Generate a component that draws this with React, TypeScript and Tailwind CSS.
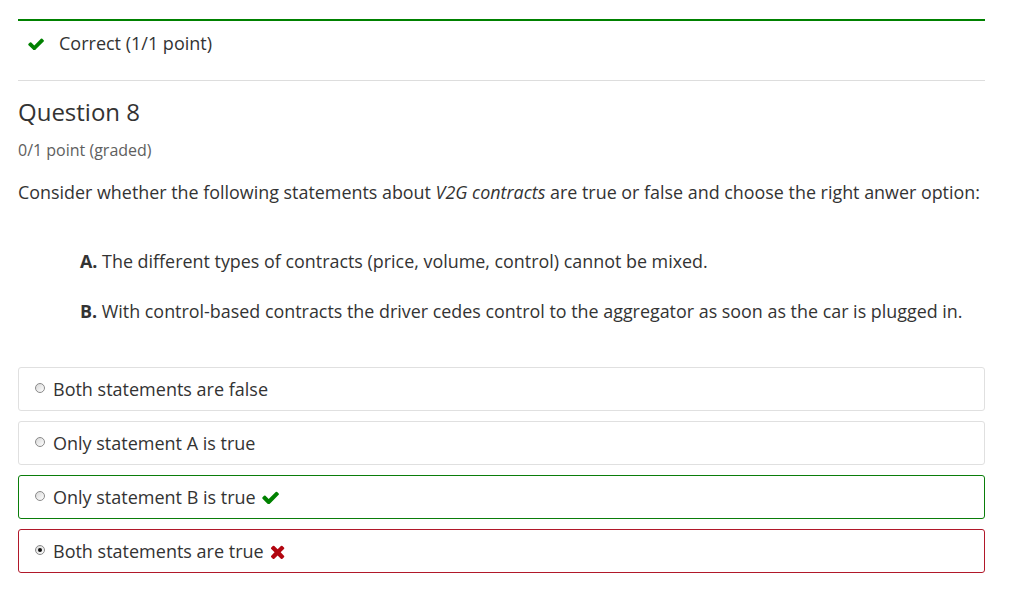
const OPTIONS = [
  { label: 'Both statements are false', state: 'none', checked: false },
  { label: 'Only statement A is true', state: 'none', checked: false },
  { label: 'Only statement B is true', state: 'correct', checked: false },
  { label: 'Both statements are true', state: 'wrong', checked: true },
];

function CheckIcon({ className }: { className?: string }) {
  return (
    <svg viewBox="95 325 1580 1110" className={className} fill="currentColor">
      <path d="M1671 566q0 40-28 68l-724 724-136 136q-28 28-68 28t-68-28l-136-136-362-362q-28-28-28-68t28-68l136-136q28-28 68-28t68 28l294 295 656-657q28-28 68-28t68 28l136 136q28 28 28 68z" />
    </svg>
  );
}

function TimesIcon({ className }: { className?: string }) {
  return (
    <svg viewBox="275 215 1220 1340" className={className} fill="currentColor">
      <path d="M1490 1322q0 40-28 68l-136 136q-28 28-68 28t-68-28l-294-294-294 294q-28 28-68 28t-68-28l-136-136q-28-28-28-68t28-68l294-294-294-294q-28-28-28-68t28-68l136-136q28-28 68-28t68 28l294 294 294-294q28-28 68-28t68 28l136 136q28 28 28 68t-28 68l-294 294 294 294q28 28 28 68z" />
    </svg>
  );
}

function Radio({ checked }: { checked: boolean }) {
  return (
    <span className="w-[10px] h-[10px] rounded-full border border-[#8a8a8a] bg-gradient-to-br from-[#d8d8d8] to-white flex items-center justify-center shrink-0">
      {checked && <span className="w-[4px] h-[4px] rounded-full bg-[#111]" />}
    </span>
  );
}

export default function App() {
  return (
    <div className="bg-white min-h-[594px] pt-[19px] pl-[18px] pr-[26px] text-[#333] font-['Open_Sans',sans-serif]">
      {/* result banner */}
      <div className="border-t-2 border-[#008100] border-b border-b-[#ddd] h-[62px] flex items-center pl-[10px] pb-[14px]">
        <CheckIcon className="w-[16px] h-[12px] text-[#008100]" />
        <span className="ml-[15px] text-[18px]">Correct (1/1 point)</span>
      </div>

      <h2 className="mt-[16px] text-[24px] leading-[29px] text-[#333]">Question 8</h2>
      <p className="mt-[13px] text-[16px] leading-[22px] text-[#5e5e5e]">0/1 point (graded)</p>

      <p className="mt-[18px] text-[17.9px] leading-[26px] whitespace-nowrap">
        Consider whether the following statements about <em>V2G contracts</em> are true or false and choose the right anwer option:
      </p>

      <div className="pl-[62px] mt-[43px] flex flex-col gap-[24px] text-[17.9px] leading-[26px]">
        <p>
          <strong>A.</strong> The different types of contracts (price, volume, control) cannot be mixed.
        </p>
        <p className="whitespace-nowrap">
          <strong>B.</strong> With control-based contracts the driver cedes control to the aggregator as soon as the car is plugged in.
        </p>
      </div>

      <div className="mt-[43px] flex flex-col gap-[10px]">
        {OPTIONS.map((opt) => (
          <div
            key={opt.label}
            className={
              'h-[44px] rounded-[3px] border flex items-center pl-[16px] ' +
              (opt.state === 'correct'
                ? 'border-[#0a7d0a]'
                : opt.state === 'wrong'
                ? 'border-[#b1182a]'
                : 'border-[#e0e0e0]')
            }
          >
            <span className="-mt-[3px]">
              <Radio checked={opt.checked} />
            </span>
            <span className="ml-[8px] text-[18px]">{opt.label}</span>
            {opt.state === 'correct' && <CheckIcon className="ml-[6px] w-[17px] h-[13px] text-[#008100]" />}
            {opt.state === 'wrong' && <TimesIcon className="ml-[6px] w-[15px] h-[15px] text-[#b20610]" />}
          </div>
        ))}
      </div>
    </div>
  );
}
